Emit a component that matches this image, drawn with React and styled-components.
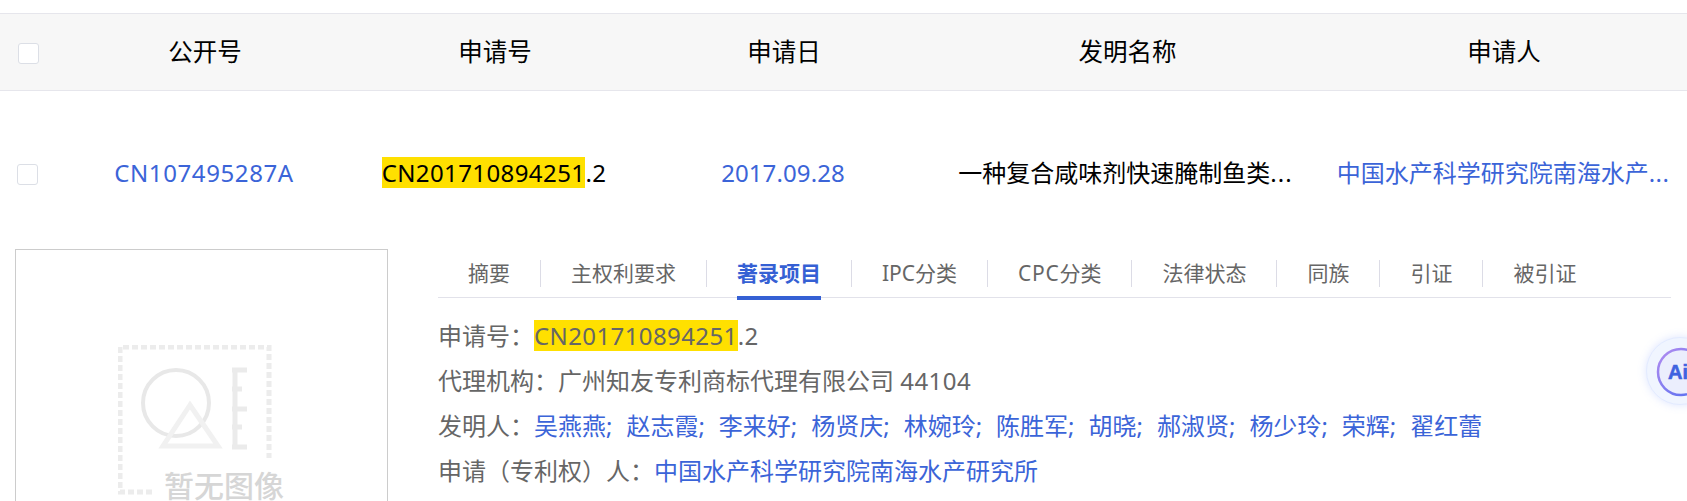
import React from 'react'
import styled, { createGlobalStyle } from 'styled-components'

const GlobalStyle = createGlobalStyle`
  html, body {
    margin: 0;
    height: 501px;
    overflow: hidden;
    background: #fff;
  }
  body {
    font-family: "Noto Sans", "Noto Sans CJK SC", sans-serif;
  }
`

const Page = styled.div`
  position: relative;
  width: 1687px;
  height: 501px;
  overflow: hidden;
  padding-top: 13px;
  box-sizing: border-box;
`

const COLUMNS = '60px 290px 290px 288px 399px 354px'

const HeaderRow = styled.div`
  display: grid;
  grid-template-columns: ${COLUMNS};
  align-items: center;
  height: 78px;
  box-sizing: border-box;
  background: #f7f7f7;
  border-top: 1px solid #e6e6ec;
  border-bottom: 1px solid #e6e6ec;
`

const DataRow = styled.div`
  display: grid;
  grid-template-columns: ${COLUMNS};
  align-items: center;
  height: 158px;
  padding-top: 5px;
  box-sizing: border-box;
`

const CheckCell = styled.div`
  padding: ${(p) => p.$top}px 0 0 ${(p) => p.$left}px;
`

const Check = styled.span`
  display: block;
  width: 21px;
  height: 21px;
  box-sizing: border-box;
  background: #fff;
  border: 1px solid #dcdfe6;
  border-radius: 3px;
`

const HeadCell = styled.div`
  font-size: 24.5px;
  line-height: 32px;
  color: #000;
  text-align: center;
`

const Cell = styled.div`
  font-size: 24px;
  line-height: 32px;
  color: ${(p) => (p.$link ? '#3b64d8' : '#000')};
  text-align: center;
  white-space: nowrap;
  overflow: hidden;
  padding-right: ${(p) => p.$shift || 0}px;
`

const Mark = styled.span`
  display: inline-block;
  height: 31px;
  line-height: 31px;
  background: #ffe000;
  vertical-align: top;
`

const Detail = styled.div`
  display: flex;
  align-items: flex-start;
  gap: 50px;
  padding-left: 15px;
`

const ImageBox = styled.div`
  flex: none;
  width: 373px;
  height: 373px;
  box-sizing: border-box;
  padding: 95px 0 0 102px;
  border: 1px solid #cccccc;
`

const Panel = styled.div`
  flex: none;
  width: 1233px;
`

const Tabs = styled.div`
  display: flex;
  align-items: center;
  height: 49px;
  box-sizing: border-box;
  border-bottom: 1px solid #e2e2ea;
`

const Tab = styled.div`
  position: relative;
  height: 27px;
  line-height: 27px;
  padding: 0 30px;
  font-size: 21px;
  font-weight: ${(p) => (p.$active ? 700 : 400)};
  color: ${(p) => (p.$active ? '#3560d4' : '#666')};
  white-space: nowrap;
  border-right: ${(p) => (p.$last ? 'none' : '1px solid #dcdce6')};
  ${(p) =>
    p.$active &&
    `&::after {
      content: "";
      position: absolute;
      left: 30px;
      right: 30px;
      bottom: -13px;
      height: 4px;
      background: #3560d4;
    }`}
`

const Fields = styled.div`
  padding-top: 15px;
`

const Field = styled.div`
  height: 45px;
  line-height: 45px;
  font-size: 24px;
  color: #666;
  white-space: nowrap;

  ${Mark} {
    margin-top: 7px;
  }
`

const Link = styled.span`
  color: #3b64d8;
`

const Inventor = styled(Link)`
  margin-right: 1.5px;
`

const Latin = styled.span`
  letter-spacing: ${(p) => p.$spacing ?? 0.45}px;
`

const Dots = styled.span`
  letter-spacing: ${(p) => p.$spacing ?? 1}px;
`

const AiBadge = styled.div`
  position: absolute;
  left: 1646px;
  top: 337px;
  width: 68px;
  height: 68px;
  box-sizing: border-box;
  border-radius: 50%;
  background: #f0f5ff;
  border: 1px solid #e3ebff;
  box-shadow: 0 0 8px rgba(120, 150, 255, 0.25);
`

const NoImageLogo = () => (
  <svg width="170" height="160" viewBox="0 0 170 160" fill="none">
    <path d="M34 147H2V2H151V113" stroke="#ececec" strokeWidth="5" strokeDasharray="6 3" />
    <circle cx="58" cy="58" r="33" stroke="#e8e8e8" strokeWidth="4" />
    <path d="M72 60L45 101H100Z" stroke="#f1f1f1" strokeWidth="5" />
    <path d="M117 23V103M114 25H129M114 64H129M114 102H129M114 44H124M114 82H124" stroke="#ebebeb" strokeWidth="5" />
    <text x="46" y="152" fontSize="30" fontWeight="500" fill="#d6d6d6" fontFamily="'Noto Sans CJK SC', sans-serif">暂无图像</text>
  </svg>
)

const AiIcon = () => (
  <svg width="68" height="68" viewBox="0 0 68 68" fill="none">
    <defs>
      <linearGradient id="aiRing" x1="0" y1="0" x2="1" y2="1">
        <stop offset="0" stopColor="#b48cf0" />
        <stop offset="1" stopColor="#4f6df0" />
      </linearGradient>
    </defs>
    <circle cx="34" cy="34" r="23" fill="#ebeefd" stroke="url(#aiRing)" strokeWidth="2.5" />
    <text x="21" y="41" fontSize="20" fontWeight="700" fill="#3f63e0" stroke="#3f63e0" strokeWidth="0.6" fontFamily="'Liberation Sans', sans-serif">Ai</text>
  </svg>
)

const tabs = [
  { label: '摘要' },
  { label: '主权利要求' },
  { label: '著录项目' },
  { label: 'IPC分类' },
  { label: 'CPC', rest: '分类' },
  { label: '法律状态' },
  { label: '同族' },
  { label: '引证' },
  { label: '被引证' },
]
const inventors = ['吴燕燕', '赵志霞', '李来好', '杨贤庆', '林婉玲', '陈胜军', '胡晓', '郝淑贤', '杨少玲', '荣辉', '翟红蕾']

const App = () => {
  return (
    <Page>
      <GlobalStyle />
      <HeaderRow>
        <CheckCell $left={18} $top={2}><Check /></CheckCell>
        <HeadCell>公开号</HeadCell>
        <HeadCell>申请号</HeadCell>
        <HeadCell>申请日</HeadCell>
        <HeadCell>发明名称</HeadCell>
        <HeadCell>申请人</HeadCell>
      </HeaderRow>

      <DataRow>
        <CheckCell $left={17} $top={4}><Check /></CheckCell>
        <Cell $link $shift={2}><Latin $spacing={0.6}>CN107495287A</Latin></Cell>
        <Cell $shift={2}><Latin $spacing={0.4}><Mark>CN201710894251</Mark>.2</Latin></Cell>
        <Cell $link $shift={2}><Latin $spacing={0.1}>2017.09.28</Latin></Cell>
        <Cell $shift={4}>一种复合咸味剂快速腌制鱼类<Dots>...</Dots></Cell>
        <Cell $link $shift={2}>中国水产科学研究院南海水产<Dots $spacing={0.4}>...</Dots></Cell>
      </DataRow>

      <Detail>
        <ImageBox><NoImageLogo /></ImageBox>
        <Panel>
          <Tabs>
            {tabs.map((t, i) => (
              <Tab key={t.label} $active={t.label === '著录项目'} $last={i === tabs.length - 1}>
                {t.rest ? <><Latin $spacing={0.7}>{t.label}</Latin>{t.rest}</> : t.label}
              </Tab>
            ))}
          </Tabs>
          <Fields>
            <Field>申请号：<Latin $spacing={0.4}><Mark>CN201710894251</Mark>.2</Latin></Field>
            <Field>代理机构：广州知友专利商标代理有限公司 <Latin>44104</Latin></Field>
            <Field>
              发明人：
              {inventors.map((n, i) => (
                <Inventor key={n}>{n}{i < inventors.length - 1 ? ';\u00a0 ' : ''}</Inventor>
              ))}
            </Field>
            <Field>申请（专利权）人：<Link>中国水产科学研究院南海水产研究所</Link></Field>
          </Fields>
        </Panel>
      </Detail>

      <AiBadge><AiIcon /></AiBadge>
    </Page>
  )
}

export default App
